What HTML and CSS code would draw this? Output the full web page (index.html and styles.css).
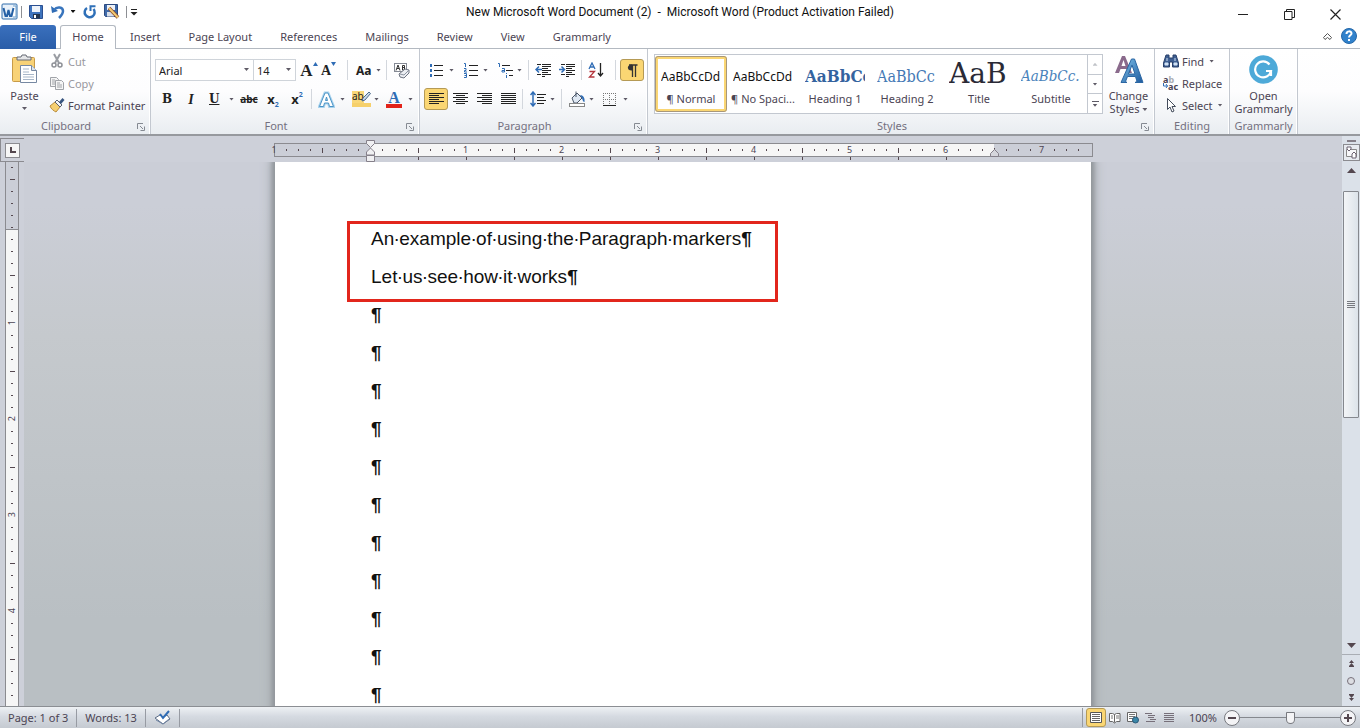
FILE: index.html
```html
<!DOCTYPE html>
<html lang="en">
<head>
    <meta charset="UTF-8">
    <meta name="viewport" content="width=device-width, initial-scale=1.0">
    <title>New Microsoft Word Document (2) - Microsoft Word</title>
    <link rel="stylesheet" href="styles.css">
</head>
<body>
    <svg class="defs" width="0" height="0" aria-hidden="true">
        <symbol id="launcher" viewBox="0 0 8 8"><path d="M.5 6V.5H6M3 3l3 3M7.500 3.500v4h-4" fill="none" stroke="#858a92"/></symbol>
        <linearGradient id="blueA" x1="0" y1="0" x2="1" y2="1"><stop offset="0" stop-color="#7cc0ea"/><stop offset="1" stop-color="#1e5a9e"/></linearGradient>
    </svg>

    <!-- Title bar -->
    <header class="title-bar">
        <div class="quick-access">
            <button class="qa" aria-label="Word"><svg width="17" height="17" viewBox="0 0 17 17"><rect x="1" y="1" width="15" height="15" rx="1" fill="#e8f1fa" stroke="#2f6cab"/><path d="M12 3h3v11h-3" fill="#fff" stroke="#6f9fcc"/><path d="M2.500 5l2 8h1.500l1.500-6 1.500 6h1.500l2-8" fill="none" stroke="#2560a5" stroke-width="2"/></svg></button>
            <span class="qa-sep"></span>
            <button class="qa" aria-label="Save"><svg width="14" height="14" viewBox="0 0 14 14"><path d="M.5.5h13v13h-11l-2-2z" fill="#3f74bd" stroke="#2b4f91"/><rect x="3" y="1" width="8" height="6" fill="#eef3fa"/><rect x="4" y="9" width="7" height="4.500" fill="#24364f"/><rect x="5" y="10" width="2" height="3" fill="#fff"/></svg></button>
            <button class="qa" aria-label="Undo"><svg width="14" height="14" viewBox="0 0 14 14"><path d="M0 1l1 7 6-2z" fill="#2f6cb5"/><path d="M3 5c3-4 9-3 9 1 0 3-2 5-4 7" fill="none" stroke="#3975bd" stroke-width="2.500"/></svg></button>
            <button class="qa-arrow" aria-label="Undo list"><i class="caret dark"></i></button>
            <button class="qa" aria-label="Repeat"><svg width="14" height="14" viewBox="0 0 14 14"><path d="M4 3a5 5 0 1 0 6.500 1" fill="none" stroke="#2f70b8" stroke-width="2.500"/><path d="M7.500 6V1.200h5" fill="none" stroke="#2f70b8" stroke-width="2"/></svg></button>
            <button class="qa" aria-label="Save as"><svg width="16" height="15" viewBox="0 0 16 15"><path d="M.5.5h13v12h-12l-1-1z" fill="#3f6aa9" stroke="#2c4a80"/><rect x="3" y="1" width="8" height="5" fill="#edf1f7"/><rect x="3" y="8" width="7" height="4.500" fill="#d8dee8"/><path d="M5 4l9 9.500" stroke="#8a4a2c" stroke-width="3.500"/><path d="M5 4l9 9.500" stroke="#f4cb72" stroke-width="2"/></svg></button>
            <span class="qa-sep"></span>
            <button class="qa-arrow" aria-label="Customize"><svg width="8" height="8" viewBox="0 0 8 8"><path d="M1 1.500h6" stroke="#222" /><path d="M.5 4h7L4 7.500z" fill="#222"/></svg></button>
        </div>
        <h1 class="window-title">New Microsoft Word Document (2)&nbsp; -&nbsp; Microsoft Word (Product Activation Failed)</h1>
        <div class="window-buttons">
            <button aria-label="Minimize"><svg width="11" height="11"><path d="M0 5.500h10" stroke="#222"/></svg></button>
            <button aria-label="Restore"><svg width="11" height="11"><path d="M.5 2.500h7.500v8H.5zM2.500 2.500V.5h8v8H8" fill="none" stroke="#222"/></svg></button>
            <button aria-label="Close"><svg width="11" height="11"><path d="M.5.5l10 10M10.500.5l-10 10" stroke="#222" stroke-width="1.200"/></svg></button>
        </div>
    </header>

    <!-- Ribbon tabs -->
    <nav class="tabs">
        <button class="tab file">File</button>
        <button class="tab active">Home</button>
        <button class="tab">Insert</button>
        <button class="tab">Page Layout</button>
        <button class="tab">References</button>
        <button class="tab">Mailings</button>
        <button class="tab">Review</button>
        <button class="tab">View</button>
        <button class="tab">Grammarly</button>
        <div class="tabs-right">
            <button aria-label="Minimize ribbon"><svg width="9" height="7" viewBox="0 0 9 7"><path d="M4.500.5L8.500 4.500 7 6.500l-2.500-2-2.500 2L.5 4.500z" fill="#fff" stroke="#555"/></svg></button>
            <button aria-label="Help"><svg width="16" height="16" viewBox="0 0 16 16"><circle cx="8" cy="8" r="7.500" fill="#3182cc" stroke="#2467a8"/><path d="M5.500 6c0-3.500 5-3.300 5-.6C10.500 7.300 8 7.400 8 9.500" fill="none" stroke="#fff" stroke-width="2"/><rect x="7" y="11" width="2" height="2" fill="#fff"/></svg></button>
        </div>
    </nav>

    <!-- Ribbon -->
    <section class="ribbon">
        <div class="group clipboard">
            <div class="group-body">
                <button class="big paste">
                    <svg width="28" height="30" viewBox="0 0 28 30"><rect x="1.500" y="3.500" width="22" height="24" rx="1" fill="#f8d277" stroke="#c89b48"/><path d="M6 6V3h4l1-2h4l1 2h4v3z" fill="#e5e6e8" stroke="#666b74"/><path d="M9.500 11.500h11l5 5v12h-16z" fill="#fff" stroke="#7688a2"/><path d="M20.500 11.500v5h5" fill="#dce5f0" stroke="#7688a2"/><path d="M12 15h6M12 18h6M12 20.500h11M12 23h11M12 25.500h11" stroke="#a8b7c9"/></svg>
                    <span>Paste</span>
                    <i class="caret"></i>
                </button>
                <div class="small-list">
                    <button class="small muted"><svg width="16" height="16" viewBox="0 0 16 16"><path d="M5 1l5 9M11 1L6 10" stroke="#9a9da3" stroke-width="2"/><circle cx="5" cy="12" r="2" fill="none" stroke="#8d9096" stroke-width="1.500"/><circle cx="11" cy="12" r="2" fill="none" stroke="#8d9096" stroke-width="1.500"/></svg>Cut</button>
                    <button class="small muted"><svg width="16" height="16" viewBox="0 0 16 16"><path d="M1.500 2.500h6l2 2v7h-8z" fill="#f5f5f5" stroke="#a0a3a8"/><path d="M6.500 5.500h6l2 2v7h-8z" fill="#f5f5f5" stroke="#a0a3a8"/><path d="M3 5h3M3 7h3M3 9h3M8 8h3M8 10h5M8 12h5" stroke="#a0a3a8"/></svg>Copy</button>
                    <button class="small"><svg width="16" height="16" viewBox="0 0 16 16"><path d="M1 9l5-4 5 5-4 5c-2-1-5-3-6-6z" fill="#f6cf70" stroke="#b98c3c"/><path d="M6 5l2-2 5 5-2 2z" fill="#f4f4f6" stroke="#5a6070"/><path d="M10 5l3.500-4 2 2L12 7z" fill="#38557f"/></svg>Format Painter</button>
                </div>
            </div>
            <div class="group-label">Clipboard<button class="launch" aria-label="Clipboard options"><svg width="8" height="8"><use href="#launcher"/></svg></button></div>
        </div>

        <div class="group font">
            <div class="group-body rows">
                <div class="row">
                    <label class="combo face"><select aria-label="Font"><option>Arial</option></select><i class="caret"></i></label>
                    <label class="combo size"><select aria-label="Font size"><option>14</option></select><i class="caret"></i></label>
                    <button class="tool serif grow" aria-label="Grow font">A<svg width="5" height="4"><path d="M0 4h5L2.500 0z" fill="#2f6cb5"/></svg></button>
                    <button class="tool serif shrink" aria-label="Shrink font">A<svg width="5" height="4"><path d="M0 0h5L2.500 4z" fill="#2f6cb5"/></svg></button>
                    <span class="sep"></span>
                    <button class="tool drop" aria-label="Change case"><b class="case">Aa</b><i class="caret"></i></button>
                    <span class="sep"></span>
                    <button class="tool" aria-label="Clear formatting"><svg width="17" height="17" viewBox="0 0 17 17"><rect x="1.500" y="1.500" width="12" height="8" fill="#fff" stroke="#858a94"/><path d="M3 8.500l2-5.500 2 5.500M4 6.500h2" fill="none" stroke="#333"/><path d="M9.500 8V3.500h2v4.500zM9.500 5.500h2" fill="none" stroke="#333"/><path d="M6 12l6-5 4 1v3l-5 5-4-1z" fill="#eceef2" stroke="#6d7380"/><path d="M7 12l4 1 5-5" fill="none" stroke="#8b93a0"/></svg></button>
                </div>
                <div class="row">
                    <button class="tool serif"><b>B</b></button>
                    <button class="tool serif"><em>I</em></button>
                    <button class="tool serif drop"><u>U</u><i class="caret"></i></button>
                    <button class="tool strike"><s>abc</s></button>
                    <button class="tool script"><b>x</b><sub>2</sub></button>
                    <button class="tool script"><b>x</b><sup>2</sup></button>
                    <span class="sep"></span>
                    <button class="tool drop" aria-label="Text effects"><svg width="17" height="17" viewBox="0 0 17 17"><path d="M1.500 15.500L7 2h3l5.500 13.500h-4L10.500 12h-4l-1 3.500zM7.500 9.500h2L8.500 6z" fill="#fff" stroke="#a9d3ee" stroke-width="3"/><path d="M1.500 15.500L7 2h3l5.500 13.500h-4L10.500 12h-4l-1 3.500zM7.500 9.500h2L8.500 6z" fill="#fff" stroke="#4a93c6"/></svg><i class="caret"></i></button>
                    <button class="tool drop highlight"><span><b>ab</b><svg width="10" height="11" viewBox="0 0 10 11"><path d="M1 10l1-3 6-6 1.500 1.500L4 9z" fill="#c9d8e8" stroke="#4c6a8d"/></svg></span><i class="caret"></i></button>
                    <button class="tool drop color"><span>A</span><i class="caret"></i></button>
                </div>
            </div>
            <div class="group-label">Font<button class="launch" aria-label="Font options"><svg width="8" height="8"><use href="#launcher"/></svg></button></div>
        </div>

        <div class="group paragraph">
            <div class="group-body rows">
                <div class="row">
                    <button class="tool drop" aria-label="Bullets"><svg width="15" height="15" viewBox="0 0 15 15"><path d="M5 2.500h9M5 7.500h9M5 12.500h9" stroke="#222"/><path d="M1 1h2v3H1zM1 6h2v3H1zM1 11h2v3H1z" fill="#2f6cb5"/></svg><i class="caret"></i></button>
                    <button class="tool drop" aria-label="Numbering"><svg width="15" height="15" viewBox="0 0 15 15"><path d="M6 2.500h9M6 7.500h9M6 12.500h9" stroke="#222"/><path d="M1 .5h1.500V4M1 5.500h2v2H1.500v1.500H4M1 10.500h2.500v4H1M1.500 12.500h2" fill="none" stroke="#2f6cb5"/></svg><i class="caret"></i></button>
                    <button class="tool drop" aria-label="Multilevel list"><svg width="16" height="15" viewBox="0 0 16 15"><path d="M5 2.500h8M9 7.500h7M12 12.500h4" stroke="#222"/><path d="M1 .5h1.500V4M5 5.500h2.500v3.500H5V7.500h2M9.500 10v1M9.500 12v3" fill="none" stroke="#2f6cb5"/></svg><i class="caret"></i></button>
                    <span class="sep"></span>
                    <button class="tool" aria-label="Decrease indent"><svg width="16" height="14" viewBox="0 0 16 14"><path d="M2 1.500h4M7 1.500h9M7 3.500h9M7 5.500h6M7 7.500h9M7 9.500h6M2 11.500h4M7 11.500h9M7 13.500h3" stroke="#222"/><path d="M7 6.500H1M4 3.500l-3 3 3 3" fill="none" stroke="#2f6cb5" stroke-width="1.500"/></svg></button>
                    <button class="tool" aria-label="Increase indent"><svg width="16" height="14" viewBox="0 0 16 14"><path d="M2 1.500h4M7 1.500h9M7 3.500h9M7 5.500h6M7 7.500h9M7 9.500h6M2 11.500h4M7 11.500h9M7 13.500h3" stroke="#222"/><path d="M0 6.500h5M2.500 3.500l3 3-3 3" fill="none" stroke="#2f6cb5" stroke-width="1.500"/></svg></button>
                    <span class="sep"></span>
                    <button class="tool" aria-label="Sort"><svg width="16" height="16" viewBox="0 0 16 16"><path d="M1 7l3-6 3 6M2.200 5h3.600" fill="none" stroke="#2f6cb5" stroke-width="1.300"/><path d="M1.500 9.500h5l-5 5.500h5" fill="none" stroke="#b3353c" stroke-width="1.300"/><path d="M12.500 1v13M10 11l2.500 3 2.500-3" fill="none" stroke="#222" stroke-width="1.300"/></svg></button>
                    <span class="sep push"></span>
                    <button class="tool pressed" aria-label="Show paragraph marks"><svg width="11" height="13" viewBox="0 0 11 13"><path d="M5 6.500C-.5 7-.5.500 5 .5z" fill="#333"/><path d="M2 1h8.500M5.500 1v12M8.500 1v12" stroke="#333" stroke-width="1.300"/></svg></button>
                </div>
                <div class="row">
                    <button class="tool pressed" aria-label="Align left"><svg width="15" height="12"><path d="M0 .5h15M0 2.500h10M0 4.500h15M0 6.500h10M0 8.500h15M0 10.500h10" stroke="#222"/></svg></button>
                    <button class="tool" aria-label="Center"><svg width="15" height="12"><path d="M0 .5h15M3 2.500h9M0 4.500h15M3 6.500h9M0 8.500h15M3 10.500h9" stroke="#222"/></svg></button>
                    <button class="tool" aria-label="Align right"><svg width="15" height="12"><path d="M0 .5h15M5 2.500h10M0 4.500h15M5 6.500h10M0 8.500h15M5 10.500h10" stroke="#222"/></svg></button>
                    <button class="tool" aria-label="Justify"><svg width="15" height="12"><path d="M0 .5h15M0 2.500h15M0 4.500h15M0 6.500h15M0 8.500h15M0 10.500h15" stroke="#222"/></svg></button>
                    <span class="sep"></span>
                    <button class="tool drop" aria-label="Line spacing"><svg width="16" height="16" viewBox="0 0 16 16"><path d="M7 3.500h9M7 6.500h7M7 9.500h9M7 12.500h7" stroke="#222"/><path d="M3 1v14M.5 4L3 1l2.500 3M.5 12L3 15l2.500-3" fill="none" stroke="#2f6cb5" stroke-width="1.500"/></svg><i class="caret"></i></button>
                    <span class="sep"></span>
                    <button class="tool drop" aria-label="Shading"><svg width="17" height="16" viewBox="0 0 17 16"><path d="M3 7l5-5 5 5-5 5H5z" fill="#dfe8f3" stroke="#4a5668"/><path d="M7 6V.5" stroke="#4a5668"/><path d="M11 4c4 0 5 4 4.500 7-1.500 0-2-2-2.500-4z" fill="#2f6cb5"/><rect x=".5" y="12.500" width="15" height="3" fill="#fff" stroke="#888"/></svg><i class="caret"></i></button>
                    <button class="tool drop" aria-label="Borders"><svg width="13" height="13"><path d="M.5 0v12M6.500 0v12M12.500 0v12M0 .5h13M0 6.500h13" stroke="#777" stroke-dasharray="1 1"/><path d="M0 12.500h13" stroke="#222"/></svg><i class="caret"></i></button>
                </div>
            </div>
            <div class="group-label">Paragraph<button class="launch" aria-label="Paragraph options"><svg width="8" height="8"><use href="#launcher"/></svg></button></div>
        </div>

        <div class="group styles">
            <div class="group-body">
                <div class="gallery">
                    <button class="style selected"><span class="preview">AaBbCcDd</span><span>¶ Normal</span></button>
                    <button class="style"><span class="preview">AaBbCcDd</span><span>¶ No Spaci...</span></button>
                    <button class="style"><span class="preview h1">AaBbCc</span><span>Heading 1</span></button>
                    <button class="style"><span class="preview h2">AaBbCc</span><span>Heading 2</span></button>
                    <button class="style"><span class="preview title">AaB</span><span>Title</span></button>
                    <button class="style"><span class="preview subtitle">AaBbCc.</span><span>Subtitle</span></button>
                    <div class="gallery-scroll">
                        <button aria-label="Scroll up"><i class="caret up"></i></button>
                        <button aria-label="Scroll down"><i class="caret"></i></button>
                        <button class="more" aria-label="More styles"><i class="caret"></i></button>
                    </div>
                </div>
                <button class="big change-styles">
                    <svg width="30" height="29" viewBox="0 0 30 29"><path d="M1 18L8 1h3l7 17h-4l-1.500-4h-6L5 18zM7.500 11h4l-2-6z" fill="#8a6a8c"/><path d="M7 27.500L17.500 4h3L29 27.500h-8l2-1-1.500-5h-8l-2 5 1.500 1zM14.500 19h6.500L18 10z" fill="url(#blueA)" stroke="#2b66a3"/></svg>
                    <span>Change<br>Styles <i class="caret"></i></span>
                </button>
            </div>
            <div class="group-label">Styles<button class="launch" aria-label="Styles options"><svg width="8" height="8"><use href="#launcher"/></svg></button></div>
        </div>

        <div class="group editing">
            <div class="group-body">
                <div class="small-list">
                    <button class="small"><svg width="16" height="14" viewBox="0 0 16 14"><path d="M3 1h3v3h4V1h3l2.500 8v4H9.500V8h-3v5H.500V9z" fill="#3e5f92" stroke="#29406a"/><path d="M2 9h3v2H2zM11 9h3v2h-3zM4 4v3M12 4v3" fill="#cfe0f2" stroke="#cfe0f2"/></svg>Find <i class="caret"></i></button>
                    <button class="small"><span class="replace-icon"><span>a<i>b</i></span><span class="second"><svg width="5" height="5"><path d="M.5 0v3h4M3 1l1.500 2L3 5" fill="none" stroke="#2f6cb5"/></svg>ac</span></span>Replace</button>
                    <button class="small"><svg width="16" height="16" viewBox="0 0 16 16"><path d="M4.500 1.500v11l2.500-2.500 2 5 2-1-2-4.500h3.500z" fill="#fff" stroke="#444c5c"/></svg>Select <i class="caret"></i></button>
                </div>
            </div>
            <div class="group-label">Editing</div>
        </div>

        <div class="group grammarly">
            <div class="group-body">
                <button class="big">
                    <svg width="29" height="29" viewBox="0 0 29 29"><circle cx="14.500" cy="14.500" r="14.300" fill="#4da9d8"/><path d="M20.500 9.500a8 8 0 1 0 1.500 6.500h-5M22 16v5" fill="none" stroke="#fff" stroke-width="2.200"/></svg>
                    <span>Open<br>Grammarly</span>
                </button>
            </div>
            <div class="group-label">Grammarly</div>
        </div>
    </section>

    <!-- Document area -->
    <main class="workspace">
        <div class="side-ruler">
            <button class="tab-stop" aria-label="Tab selector"><span><svg width="6" height="6"><path d="M1 0v5h5" fill="none" stroke="#55484f" stroke-width="2"/></svg></span></button>
            <div class="vruler">
                <div class="vmargin"></div>
                <div class="vhalf"></div>
                <div class="vinch"><span>1</span></div>
                <div class="vinch"><span>2</span></div>
                <div class="vinch"><span>3</span></div>
                <div class="vinch"><span>4</span></div>
                <div class="vinch"></div>
            </div>
        </div>
        <div class="canvas">
            <div class="ruler-row">
                <div class="hruler">
                    <div class="hmargin"><span>1</span></div>
                    <div class="hhalf"></div>
                    <div class="hinch"><span>1</span></div>
                    <div class="hinch"><span>2</span></div>
                    <div class="hinch"><span>3</span></div>
                    <div class="hinch"><span>4</span></div>
                    <div class="hinch"><span>5</span></div>
                    <div class="hinch"><span>6</span></div>
                    <div class="hinch outside"><span>7</span></div>
                    <svg class="indent-left" width="9" height="22" viewBox="0 0 9 22"><path d="M.5.5h8v3l-4 4-4-4zM4.500 8l4 4v3h-8v-3zM.5 15.500h8v6h-8z" fill="#f0f0f2" stroke="#85808a"/></svg>
                    <svg class="indent-right" width="9" height="8" viewBox="0 0 9 8"><path d="M4.500.5l4 4v3h-8v-3z" fill="#d5d6dc" stroke="#85808a"/></svg>
                </div>
            </div>
            <div class="page-view">
                <article class="page">
                    <div class="marked">
                        <p>An<i>·</i>example<i>·</i>of<i>·</i>using<i>·</i>the<i>·</i>Paragraph<i>·</i>markers<b>¶</b></p>
                        <p>Let<i>·</i>us<i>·</i>see<i>·</i>how<i>·</i>it<i>·</i>works<b>¶</b></p>
                    </div>
                    <p><b>¶</b></p>
                    <p><b>¶</b></p>
                    <p><b>¶</b></p>
                    <p><b>¶</b></p>
                    <p><b>¶</b></p>
                    <p><b>¶</b></p>
                    <p><b>¶</b></p>
                    <p><b>¶</b></p>
                    <p><b>¶</b></p>
                    <p><b>¶</b></p>
                    <p><b>¶</b></p>
                </article>
            </div>
        </div>
        <div class="scrollbar">
            <span class="split"></span>
            <button class="view-ruler" aria-label="View ruler"><svg width="13" height="13" viewBox="0 0 13 13"><path d="M1.500 3.500h10v7h-10z" fill="#f7f7f9" stroke="#888"/><path d="M2 1h4v2L4 5 2 3zM7 8l2-2 2 2v4H7z" fill="#fff" stroke="#6b6070"/></svg></button>
            <button class="arrow" aria-label="Scroll up"><svg width="9" height="5"><path d="M0 5h9L4.500 0z" fill="#54474f"/></svg></button>
            <div class="track">
                <div class="thumb"><i></i></div>
            </div>
            <button class="arrow last" aria-label="Scroll down"><svg width="9" height="5"><path d="M0 0h9L4.500 5z" fill="#54474f"/></svg></button>
            <button class="browse" aria-label="Previous page"><svg width="7" height="7"><path d="M1 3h5L3.500 0zM1 6h5L3.500 3z" fill="#54474f"/><path d="M1 6.500h5" stroke="#54474f"/></svg></button>
            <button class="browse" aria-label="Select browse object"><svg width="8" height="8"><circle cx="4" cy="4" r="3.500" fill="#dcdde2" stroke="#77707a"/></svg></button>
            <button class="browse" aria-label="Next page"><svg width="7" height="7"><path d="M1 .5h5" stroke="#54474f"/><path d="M1 1h5L3.500 4zM1 4h5L3.500 7z" fill="#54474f"/></svg></button>
        </div>
    </main>

    <!-- Status bar -->
    <footer class="status-bar">
        <button class="status-item">Page: 1 of 3</button>
        <button class="status-item">Words: 13</button>
        <button class="status-item" aria-label="Proofing"><svg width="17" height="15" viewBox="0 0 17 15"><path d="M1 8l5-3 3 2 4-2 3 4-7 5z" fill="#fff" stroke="#5b6c86"/><path d="M2 10l7 4 6-5" fill="none" stroke="#7488a6"/><path d="M6 4l3 4 6-7" fill="none" stroke="#2f6cb5" stroke-width="2"/></svg></button>
        <div class="status-right">
            <button class="view pressed" aria-label="Print layout"><svg width="12" height="12"><path d="M.5.5h11v10H.5z" fill="#fff" stroke="#555"/><path d="M2 2.500h8M2 4.500h8M2 6.500h8M2 8.500h8" stroke="#666"/></svg></button>
            <button class="view" aria-label="Full screen reading"><svg width="12" height="12"><path d="M.5 1.500h3l2 1 2-1h3.500v8H7.500l-2 1.500-2-1.500h-3zM5.500 2.500v8" fill="#fff" stroke="#666"/><path d="M2 4h2M2 6h2M7 4h3M7 6h3" stroke="#777"/></svg></button>
            <button class="view" aria-label="Web layout"><svg width="12" height="12"><path d="M.5.5h9v9h-9z" fill="#fff" stroke="#666"/><path d="M2 2.500h6M2 4.500h6M2 6.500h4" stroke="#777"/><circle cx="8.500" cy="8" r="3" fill="#3b87a8" stroke="#2a5878"/></svg></button>
            <button class="view" aria-label="Outline"><svg width="12" height="12"><path d="M0 1.500h7M3 3.500h7M3 5.500h6M5 7.500h6M1 9.500h9" stroke="#77707a"/></svg></button>
            <button class="view" aria-label="Draft"><svg width="12" height="12"><path d="M1 1.500h10M1 3.500h10M1 5.500h10M1 7.500h10M1 9.500h10" stroke="#77707a"/></svg></button>
            <button class="zoom-value">100%</button>
            <button class="zoom-button" aria-label="Zoom out"><svg width="16" height="16"><circle cx="8" cy="8" r="7.500" fill="#f4f4f6" stroke="#77797f"/><path d="M4 8h8" stroke="#54474f" stroke-width="2"/></svg></button>
            <input class="zoom-slider" type="range" min="0" max="100" value="50" aria-label="Zoom">
            <button class="zoom-button" aria-label="Zoom in"><svg width="16" height="16"><circle cx="8" cy="8" r="7.500" fill="#f4f4f6" stroke="#77797f"/><path d="M4 8h8M8 4v8" stroke="#54474f" stroke-width="2"/></svg></button>
        </div>
    </footer>
</body>
</html>
```

FILE: styles.css
```css
*,
*::before,
*::after {
    box-sizing: border-box;
}

body {
    margin: 0;
    height: 100vh;
    display: flex;
    flex-direction: column;
    overflow: hidden;
    font-family: "Noto Sans", "Open Sans", sans-serif;
    font-size: 11px;
    line-height: 13px;
    color: #4b4453;
    background-color: #fff;
}

button {
    display: flex;
    align-items: center;
    justify-content: center;
    margin: 0;
    padding: 0;
    border: none;
    background: none;
    font: inherit;
    color: inherit;
    white-space: nowrap;
}

svg {
    display: block;
    flex: none;
}

.defs {
    position: absolute;
}

.caret {
    display: inline-block;
    flex: none;
    width: 5px;
    height: 3px;
    background-color: #5e5a66;
    clip-path: polygon(0 0, 100% 0, 50% 100%);
}

.caret.dark {
    background-color: #111;
}

.caret.up {
    background-color: #c0c3c8;
    clip-path: polygon(0 100%, 100% 100%, 50% 0);
}

/* title bar */
.title-bar {
    display: grid;
    grid-template-columns: 1fr auto 1fr;
    align-items: center;
    height: 25px;
    flex: none;
}

.quick-access {
    display: flex;
    align-items: center;
    padding-bottom: 2px;
}

.qa {
    width: 22px;
    height: 20px;
}

.qa:first-child {
    width: 18px;
}

.qa-sep {
    width: 1px;
    height: 12px;
    margin: 0 3px;
    background-color: #8d8f94;
}

.qa-arrow {
    width: 8px;
    height: 20px;
    margin-right: 2px;
}

.window-title {
    margin: 0;
    font-family: Roboto, "Noto Sans", sans-serif;
    font-size: 12px;
    font-weight: normal;
    color: #111;
}

.window-buttons {
    display: flex;
    justify-content: flex-end;
    padding: 3px 2px 0 0;
}

.window-buttons button {
    width: 46px;
    height: 20px;
}

/* tabs */
.tabs {
    display: flex;
    flex: none;
    height: 24px;
    border-bottom: 1px solid #b3b9c1;
}

.tab {
    height: 24px;
    padding: 0 14px 2px;
}

.tab.file {
    width: 56px;
    margin-right: 4px;
    border-radius: 3px 3px 0 0;
    background: linear-gradient(#3a70bd, #2a5da8);
    color: #fff;
}

.tab.active {
    width: 56px;
    border: 1px solid #b3b9c1;
    border-bottom: none;
    border-radius: 3px 3px 0 0;
    background-color: #fff;
}

.tabs-right {
    display: flex;
    gap: 9px;
    margin-left: auto;
    padding: 0 3px 1px 0;
}

/* ribbon */
.ribbon {
    display: flex;
    flex: none;
    height: 87px;
    border-bottom: 2px solid #96999e;
    background: linear-gradient(#fff 0%, #fdfdfe 50%, #e9edf1 100%);
}

.group {
    display: flex;
    flex-direction: column;
    border-right: 1px solid #c3c8d0;
    box-shadow: inset -1px 0 #fff;
}

.group-body {
    flex: 1;
    display: flex;
}

.group-label {
    position: relative;
    height: 17px;
    padding: 2px 18px 0 0;
    text-align: center;
    color: #74707f;
}

.launch {
    position: absolute;
    right: 5px;
    top: 6px;
}

.clipboard {
    width: 151px;
}

.font {
    width: 269px;
}

.paragraph {
    width: 228px;
}

.styles {
    width: 507px;
}

.editing {
    width: 75px;
}

.grammarly {
    width: 68px;
}

.editing .group-label,
.grammarly .group-label {
    padding-right: 0;
}

.big {
    flex-direction: column;
    justify-content: flex-start;
    gap: 5px;
    padding-top: 6px;
}

.paste {
    width: 49px;
    padding-top: 5px;
}

.small-list {
    display: flex;
    flex-direction: column;
    padding-top: 1px;
}

.small {
    height: 22px;
    gap: 3px;
    justify-content: flex-start;
}

.small .caret {
    margin-left: 2px;
}

.muted {
    color: #98989e;
}

.editing .small-list {
    padding-left: 8px;
}

.replace-icon {
    display: flex;
    flex-direction: column;
    width: 16px;
    font-size: 9px;
    font-weight: bold;
    line-height: 7px;
    text-align: left;
}

.replace-icon i {
    font-style: normal;
    color: #a9acb2;
}

.second {
    display: flex;
}

.grammarly .big {
    width: 100%;
}

.rows {
    flex-direction: column;
    padding: 9px 3px 0 4px;
    gap: 5px;
}

.row {
    display: flex;
    align-items: center;
    height: 24px;
}

.combo {
    position: relative;
    display: flex;
    height: 22px;
    border: 1px solid #cfd4da;
    background-color: #fff;
}

.combo select {
    appearance: none;
    width: 100%;
    border: none;
    padding: 0 3px;
    background: none;
    font: inherit;
    color: #222;
}

.combo .caret {
    position: absolute;
    right: 4px;
    top: 8px;
}

.face {
    width: 99px;
}

.size {
    width: 43px;
    margin-left: -1px;
    margin-right: 1px;
}

.tool {
    width: 24px;
    height: 22px;
    flex: none;
    color: #222;
}

.drop {
    width: 34px;
    justify-content: space-between;
    padding: 0 3px 0 4px;
}

.paragraph .drop {
    padding: 0 4px 0 5px;
}

.sep {
    width: 1px;
    height: 20px;
    margin: 0 2px;
    background-color: #d3d7dd;
}

.sep.push {
    margin-left: auto;
    margin-right: 4px;
}

.serif {
    font-family: "DejaVu Serif", serif;
    font-size: 12px;
    font-weight: bold;
}

.serif em {
    font-family: "Liberation Serif", serif;
    font-size: 14px;
}

.serif u {
    margin-left: 2px;
}

.grow {
    font-family: "Liberation Serif", serif;
    font-size: 17px;
}

.shrink {
    font-family: "Liberation Serif", serif;
    font-size: 14px;
    justify-content: flex-start;
}

.grow svg,
.shrink svg {
    align-self: flex-start;
    margin-top: 3px;
}

.case {
    margin-left: 2px;
    font-size: 12px;
}

.strike {
    font-size: 10px;
    font-weight: bold;
}

.script b {
    font-size: 13px;
}

.script sub,
.script sup {
    font-size: 7px;
    line-height: 7px;
    color: #2f6cb5;
    font-weight: bold;
}

.script sub {
    align-self: flex-end;
    padding-bottom: 2px;
}

.script sup {
    align-self: flex-start;
    padding-top: 3px;
}

.highlight span {
    display: flex;
    height: 16px;
    border-bottom: 4px solid #f6d06b;
    font-size: 10px;
    line-height: 11px;
}

.highlight b {
    font-weight: normal;
    background-color: #f9d778;
}

.highlight svg {
    margin-left: -3px;
}

.color span {
    width: 16px;
    height: 17px;
    border-bottom: 4px solid #e2231a;
    font-family: "Liberation Serif", serif;
    font-size: 16px;
    font-weight: bold;
    line-height: 13px;
    color: #2f6cb5;
}

.pressed {
    border: 1px solid #b59a55;
    border-radius: 3px;
    background-color: #fad673;
}

/* styles gallery */
.styles .group-body {
    padding: 5px 4px 0 6px;
    gap: 4px;
}

.gallery {
    display: flex;
    height: 60px;
    border: 1px solid #c3c8d0;
    background-color: #fff;
}

.style {
    width: 72px;
    flex-direction: column;
    justify-content: flex-end;
    gap: 3px;
    padding: 0 6px 8px;
}

.style.selected {
    padding: 0 3px 4px;
    margin: 1px 0;
    border: 3px solid #fad673;
    outline: 1px solid #a8977a;
    outline-offset: -1px;
    border-radius: 3px;
}

.preview {
    display: flex;
    align-items: center;
    width: 60px;
    height: 26px;
    overflow: hidden;
    font-size: 12px;
    color: #111;
}

.preview.h1 {
    font-family: "DejaVu Serif Condensed", "DejaVu Serif", serif;
    font-size: 17px;
    font-weight: bold;
    color: #34639f;
}

.preview.h2 {
    font-family: "DejaVu Serif Condensed", "DejaVu Serif", serif;
    font-size: 16px;
    color: #4579b5;
}

.preview.title {
    height: 32px;
    font-family: "DejaVu Serif", serif;
    font-size: 28px;
    color: #2a2a36;
}

.preview.subtitle {
    font-family: "DejaVu Serif Condensed", "DejaVu Serif", serif;
    font-size: 15px;
    font-style: italic;
    color: #4a83bb;
}

.gallery-scroll {
    width: 15px;
    display: flex;
    flex-direction: column;
    border-left: 1px solid #c3c8d0;
}

.gallery-scroll button {
    flex: 1;
    border-bottom: 1px solid #c3c8d0;
}

.gallery-scroll button:last-child {
    border-bottom: none;
}

.more {
    flex-direction: column;
    gap: 2px;
}

.more::before {
    content: "";
    width: 7px;
    height: 1px;
    background-color: #5e5a66;
}

.change-styles {
    width: 44px;
    padding-top: 1px;
}

.change-styles .caret {
    margin-bottom: 2px;
}

/* workspace */
.workspace {
    flex: 1;
    min-height: 0;
    display: flex;
    background: linear-gradient(#cbced7 0%, #cbced7 12%, #c5c9cd 35%, #b9bfc3 85%);
}

.side-ruler {
    width: 24px;
    display: flex;
    flex-direction: column;
    background-color: #cdd0d9;
}

.tab-stop {
    flex: none;
    width: 25px;
    height: 24px;
    margin: 2px 0 0;
    border: 1px solid #8b8b90;
}

.tab-stop span {
    display: flex;
    align-items: center;
    justify-content: center;
    width: 15px;
    height: 15px;
    border: 1px solid #8b8b90;
    background-color: #f6f6f6;
}

.vruler {
    flex: 1;
    min-height: 0;
    width: 14px;
    margin-left: 5px;
    overflow: hidden;
    border: solid #8b8b90;
    border-width: 0 1px;
    background-color: #f6f6f6;
}

.vmargin {
    height: 68px;
    border-bottom: 1px solid #8b8b90;
    background:
        linear-gradient(#55484f, #55484f) center 17px / 5px 1px no-repeat,
        linear-gradient(#55484f 1px, transparent 1px) center 5px / 2px 12px repeat-y,
        #cbced7;
}

.vhalf {
    height: 45px;
    background: linear-gradient(#55484f 1px, transparent 1px) center 9px / 2px 12px repeat-y;
}

.vinch {
    display: flex;
    align-items: center;
    justify-content: center;
    height: 96px;
    background:
        linear-gradient(#55484f, #55484f) center 0 / 5px 1px no-repeat,
        linear-gradient(#55484f 1px, transparent 1px) center 0 / 2px 12px repeat-y;
}

.vinch span {
    writing-mode: sideways-lr;
    padding: 2px 0;
    font-size: 9px;
    line-height: 12px;
    background-color: #f6f6f6;
}

.canvas {
    flex: 1;
    min-width: 0;
    display: flex;
    flex-direction: column;
}

.ruler-row {
    flex: none;
    height: 26px;
    padding-top: 7px;
    background-color: #cdd0d9;
}

.hruler {
    position: relative;
    display: flex;
    width: 819px;
    height: 14px;
    margin: 0 auto;
    border: 1px solid #8b8b90;
    background-color: #cbced7;
}

.hmargin,
.hhalf,
.hinch {
    flex: none;
    height: 12px;
    font-size: 9px;
    line-height: 12px;
}

.hmargin {
    width: 95px;
    background:
        linear-gradient(#55484f, #55484f) 47px center / 1px 5px no-repeat,
        linear-gradient(90deg, #55484f 1px, transparent 1px) 11px center / 12px 2px repeat-x;
}

.hmargin span {
    display: block;
    width: 8px;
    margin-left: -3px;
}

.hhalf {
    width: 48px;
    background: linear-gradient(90deg, #55484f 1px, transparent 1px) 0 center / 12px 2px repeat-x #f6f6f6;
}

.hinch {
    width: 96px;
    text-align: center;
    background:
        linear-gradient(#55484f, #55484f) 0 center / 1px 5px no-repeat,
        linear-gradient(90deg, #55484f 1px, transparent 1px) 0 center / 12px 2px repeat-x,
        #f6f6f6;
}

.hinch span {
    display: block;
    width: 10px;
    height: 12px;
    margin: 0 auto;
    background-color: #f6f6f6;
}

/* default tab marks sit under the ruler */
.hinch::after {
    content: "";
    display: block;
    height: 3px;
    margin-top: 1px;
    background: linear-gradient(90deg, #55484f 1px, transparent 1px) 0 0 / 48px 3px repeat-x;
}

.hinch.outside,
.hinch.outside span {
    background-color: #cbced7;
}

.hinch.outside::after {
    display: none;
}

.indent-left {
    position: absolute;
    left: 91px;
    top: -4px;
}

.indent-right {
    position: absolute;
    left: 715px;
    top: 5px;
}

.page-view {
    flex: 1;
    min-height: 0;
    overflow: hidden;
}

.page {
    width: 816px;
    min-height: 100%;
    margin: 0 auto;
    padding: 58px 96px 0;
    background-color: #fff;
    box-shadow: 0 0 4px 3px #92979c, 0 0 10px 4px #a4a9ae;
    font-family: "Liberation Sans", Arial, sans-serif;
    font-size: 19px;
    line-height: 38px;
    color: #111;
}

.page p {
    margin: 0;
}

/* formatting marks: a dot as wide as a space, a heavy pilcrow */
.page i {
    display: inline-flex;
    justify-content: center;
    width: 5px;
    font-style: normal;
}

.marked {
    position: relative;
}

.marked::after {
    content: "";
    position: absolute;
    left: -24px;
    top: 1px;
    width: 431px;
    height: 81px;
    border: 3px solid #e2261c;
}

/* scrollbar */
.scrollbar {
    width: 18px;
    display: flex;
    flex-direction: column;
    align-items: center;
    padding-top: 4px;
    background-color: #dbe1e9;
}

.split {
    width: 9px;
    height: 2px;
    background-color: #857f88;
}

.view-ruler {
    width: 17px;
    height: 17px;
    margin-top: 2px;
    border: 1px solid #8b8b90;
    background-color: #e8ebf0;
}

.arrow {
    width: 100%;
    height: 18px;
}

.arrow.last {
    border-bottom: 1px solid #a9adb4;
}

.track {
    flex: 1;
    width: 100%;
    padding: 12px 1px 0;
}

.thumb {
    display: flex;
    align-items: center;
    justify-content: center;
    height: 51%;
    border: 1px solid #85888e;
    border-radius: 1px;
    background: linear-gradient(90deg, #f3f5f7, #dce3ea);
}

.thumb i {
    width: 8px;
    height: 7px;
    background: repeating-linear-gradient(#77797f 0 1px, transparent 1px 2px);
}

.browse {
    width: 100%;
    height: 17px;
}

/* status bar */
.status-bar {
    display: flex;
    align-items: center;
    flex: none;
    height: 22px;
    border-top: 1px solid #8b8e93;
    background: linear-gradient(#eef1f4, #d5dae1 45%, #c5cad1);
}

.status-item {
    height: 18px;
    padding: 0 8px 1px;
    border-right: 1px solid #979ba3;
}

.status-right {
    display: flex;
    align-items: center;
    margin-left: auto;
    padding: 0 4px 0 3px;
    border-left: 1px solid #979ba3;
}

.view {
    width: 18px;
    height: 19px;
}

.view.pressed {
    width: 20px;
}

.zoom-value {
    width: 46px;
    padding: 0 0 1px 4px;
}

.zoom-button {
    width: 16px;
    height: 16px;
}

.zoom-slider {
    appearance: none;
    width: 100px;
    height: 16px;
    margin: 0;
    background: linear-gradient(#85888e, #85888e) 0 center / 100% 1px no-repeat;
}

.zoom-slider::-webkit-slider-thumb {
    appearance: none;
    width: 9px;
    height: 12px;
    border: 1px solid #77797f;
    border-radius: 1px 1px 5px 5px;
    background-color: #f4f4f6;
}
```
